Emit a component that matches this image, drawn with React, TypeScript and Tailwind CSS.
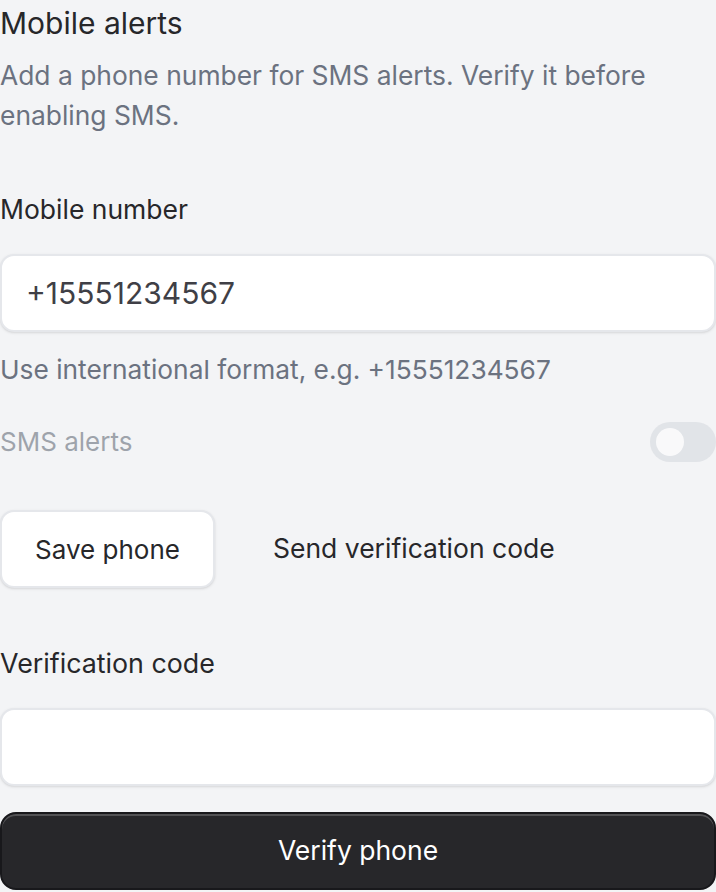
export default function App() {
  return (
    <div
      className="min-h-[892px] w-[716px] overflow-hidden bg-[#f3f4f6] text-[#27272a]"
      style={{ fontFamily: 'Inter, "Noto Sans", sans-serif' }}
    >
      <section className="flex flex-col pt-[1px]">
        <h2 className="text-[30px] font-normal leading-[44px]">Mobile alerts</h2>
        <p className="mt-[10px] text-[26.4px] leading-[40px] text-[#6b7280]">
          Add a phone number for SMS alerts. Verify it before enabling SMS.
        </p>

        <label className="mt-[56px] text-[26.5px] font-normal leading-[36px]">Mobile number</label>
        <input
          defaultValue="+15551234567"
          className="mt-[27px] h-[78px] w-full rounded-[14px] border-2 border-[#e5e7eb] bg-white px-[24px] text-[30px] text-[#3f3f46] shadow-sm outline-none"
        />
        <p className="mt-[18px] text-[26.3px] leading-[40px] text-[#6b7280]">
          Use international format, e.g. +15551234567
        </p>

        <div className="mt-[32px] flex items-center justify-between opacity-50">
          <span className="text-[26px] leading-[40px] text-[#4b5563]">SMS alerts</span>
          <button className="flex h-[40px] w-[66px] items-center rounded-full bg-[#d1d5db] px-[6px]">
            <span className="h-[28px] w-[28px] rounded-full bg-white" />
          </button>
        </div>

        <div className="mt-[48px] flex items-center gap-[30px]">
          <button className="h-[78px] w-[215px] rounded-[14px] border-2 border-[#e5e7eb] bg-white text-[26px] font-normal shadow-sm">
            Save phone
          </button>
          <button className="h-[78px] rounded-[14px] px-[28px] text-[26.5px] font-normal">
            Send verification code
          </button>
        </div>

        <label className="mt-[57px] text-[26.8px] font-normal leading-[36px]">Verification code</label>
        <input className="mt-[27px] h-[78px] w-full rounded-[14px] border-2 border-[#e5e7eb] bg-white px-[24px] text-[30px] shadow-sm outline-none" />

        <button className="mt-[26px] h-[78px] w-full rounded-[16px] border-2 border-[#18181b] bg-[#27272a] text-[26.5px] font-normal text-white shadow-[inset_0_2px_0_rgba(255,255,255,0.2)]">
          Verify phone
        </button>
      </section>
    </div>
  )
}
